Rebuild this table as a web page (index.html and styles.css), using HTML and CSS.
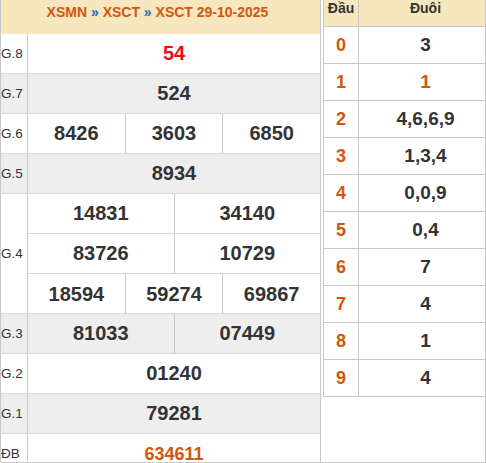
FILE: index.html
```html
<!DOCTYPE html>
<html lang="vi">
<head>
<meta charset="utf-8">
<title>XSCT 29-10-2025</title>
<link rel="stylesheet" href="styles.css">
</head>
<body>
<div class="wrap">
  <div class="left">
    <div class="title"><span class="org">XSMN</span> <span class="sep">»</span> <span class="org">XSCT</span> <span class="sep">»</span> <span class="org">XSCT 29-10-2025</span></div>
    <div class="row"><div class="lbl">G.8</div><div class="cells"><div class="cell red">54</div></div></div>
    <div class="row alt"><div class="lbl">G.7</div><div class="cells"><div class="cell">524</div></div></div>
    <div class="row"><div class="lbl">G.6</div><div class="cells"><div class="cell">8426</div><div class="cell">3603</div><div class="cell">6850</div></div></div>
    <div class="row alt"><div class="lbl">G.5</div><div class="cells"><div class="cell">8934</div></div></div>
    <div class="row tall"><div class="lbl">G.4</div>
      <div class="stack">
        <div class="cells sub"><div class="cell">14831</div><div class="cell">34140</div></div>
        <div class="cells sub"><div class="cell">83726</div><div class="cell">10729</div></div>
        <div class="cells"><div class="cell">18594</div><div class="cell">59274</div><div class="cell">69867</div></div>
      </div>
    </div>
    <div class="row alt"><div class="lbl">G.3</div><div class="cells"><div class="cell">81033</div><div class="cell">07449</div></div></div>
    <div class="row"><div class="lbl">G.2</div><div class="cells"><div class="cell">01240</div></div></div>
    <div class="row alt"><div class="lbl">G.1</div><div class="cells"><div class="cell">79281</div></div></div>
    <div class="row"><div class="lbl">ĐB</div><div class="cells"><div class="cell org db">634611</div></div></div>
  </div>
  <div class="right">
    <div class="lt head"><div class="h">Đầu</div><div class="t">Đuôi</div></div>
    <div class="lt"><div class="h">0</div><div class="t">3</div></div>
    <div class="lt"><div class="h">1</div><div class="t org">1</div></div>
    <div class="lt"><div class="h">2</div><div class="t">4,6,6,9</div></div>
    <div class="lt"><div class="h">3</div><div class="t">1,3,4</div></div>
    <div class="lt"><div class="h">4</div><div class="t">0,0,9</div></div>
    <div class="lt"><div class="h">5</div><div class="t">0,4</div></div>
    <div class="lt"><div class="h">6</div><div class="t">7</div></div>
    <div class="lt"><div class="h">7</div><div class="t">4</div></div>
    <div class="lt"><div class="h">8</div><div class="t">1</div></div>
    <div class="lt"><div class="h">9</div><div class="t">4</div></div>
  </div>
</div>
</body>
</html>
```
FILE: styles.css
```css
html, body { margin: 0; padding: 0; background: #fff; }
body { font-family: "Liberation Sans", Arial, sans-serif; color: #333; }

.wrap {
  display: flex;
  align-items: flex-start;
  width: 486px;
  height: 463px;
  box-sizing: border-box;
  border: 1px solid #c8c8c8;
  border-top: none;
  overflow: hidden;
}

.left {
  width: 320px;
  flex: none;
  box-sizing: border-box;
  border-right: 1px solid #c8c8c8;
}

.title {
  height: 34px;
  box-sizing: border-box;
  padding: 4px 6px 0 0;
  background: #f6e7bf;
  font-size: 14px;
  font-weight: bold;
  text-align: center;
  line-height: 16px;
}
.org { color: #d2560e; }
.sep { color: #1e6fb8; }
.red { color: #ee0a1c; }

.row {
  display: flex;
  height: 40px;
  box-sizing: border-box;
  border-bottom: 1px solid #d6d6d6;
}
.row.tall { height: 120px; }
.row.alt { background: #eeeeee; }

.lbl {
  width: 27px;
  flex: none;
  box-sizing: border-box;
  border-right: 1px solid #c8c8c8;
  display: flex;
  align-items: center;
  font-size: 13.5px;
  color: #333;
}

.stack { flex: 1; display: flex; flex-direction: column; }
.stack .cells { height: 40px; flex: none; box-sizing: border-box; }
.stack .cells.sub { border-bottom: 1px solid #d6d6d6; }

.cells { flex: 1; display: flex; }
.cell {
  flex: 1 1 0;
  display: flex;
  align-items: center;
  justify-content: center;
  font-size: 20px;
  font-weight: bold;
}
.cell + .cell { border-left: 1px solid #c8c8c8; }
.cell.db { font-size: 18px; padding-top: 2px; }

.right {
  flex: 1;
  margin-left: 2px;
  border-left: 1px solid #c8c8c8;
}
.lt {
  display: flex;
  height: 37px;
  box-sizing: border-box;
  border-bottom: 1px solid #c8c8c8;
  font-size: 18px;
  font-weight: bold;
}
.lt .h {
  width: 35px;
  flex: none;
  box-sizing: border-box;
  border-right: 1px solid #c8c8c8;
  display: flex;
  align-items: center;
  justify-content: center;
  color: #d2560e;
}
.lt .t {
  flex: 1;
  display: flex;
  align-items: center;
  justify-content: center;
  padding-left: 7px;
  font-size: 19px;
}
.lt .t.org { color: #d2560e; }
.lt.head {
  height: 27px;
  background: #f6e7bf;
  font-size: 14px;
}
.lt.head .h, .lt.head .t {
  align-items: flex-start;
  padding-top: 1px;
  color: #333;
  line-height: 15px;
  font-size: 14px;
}
```
